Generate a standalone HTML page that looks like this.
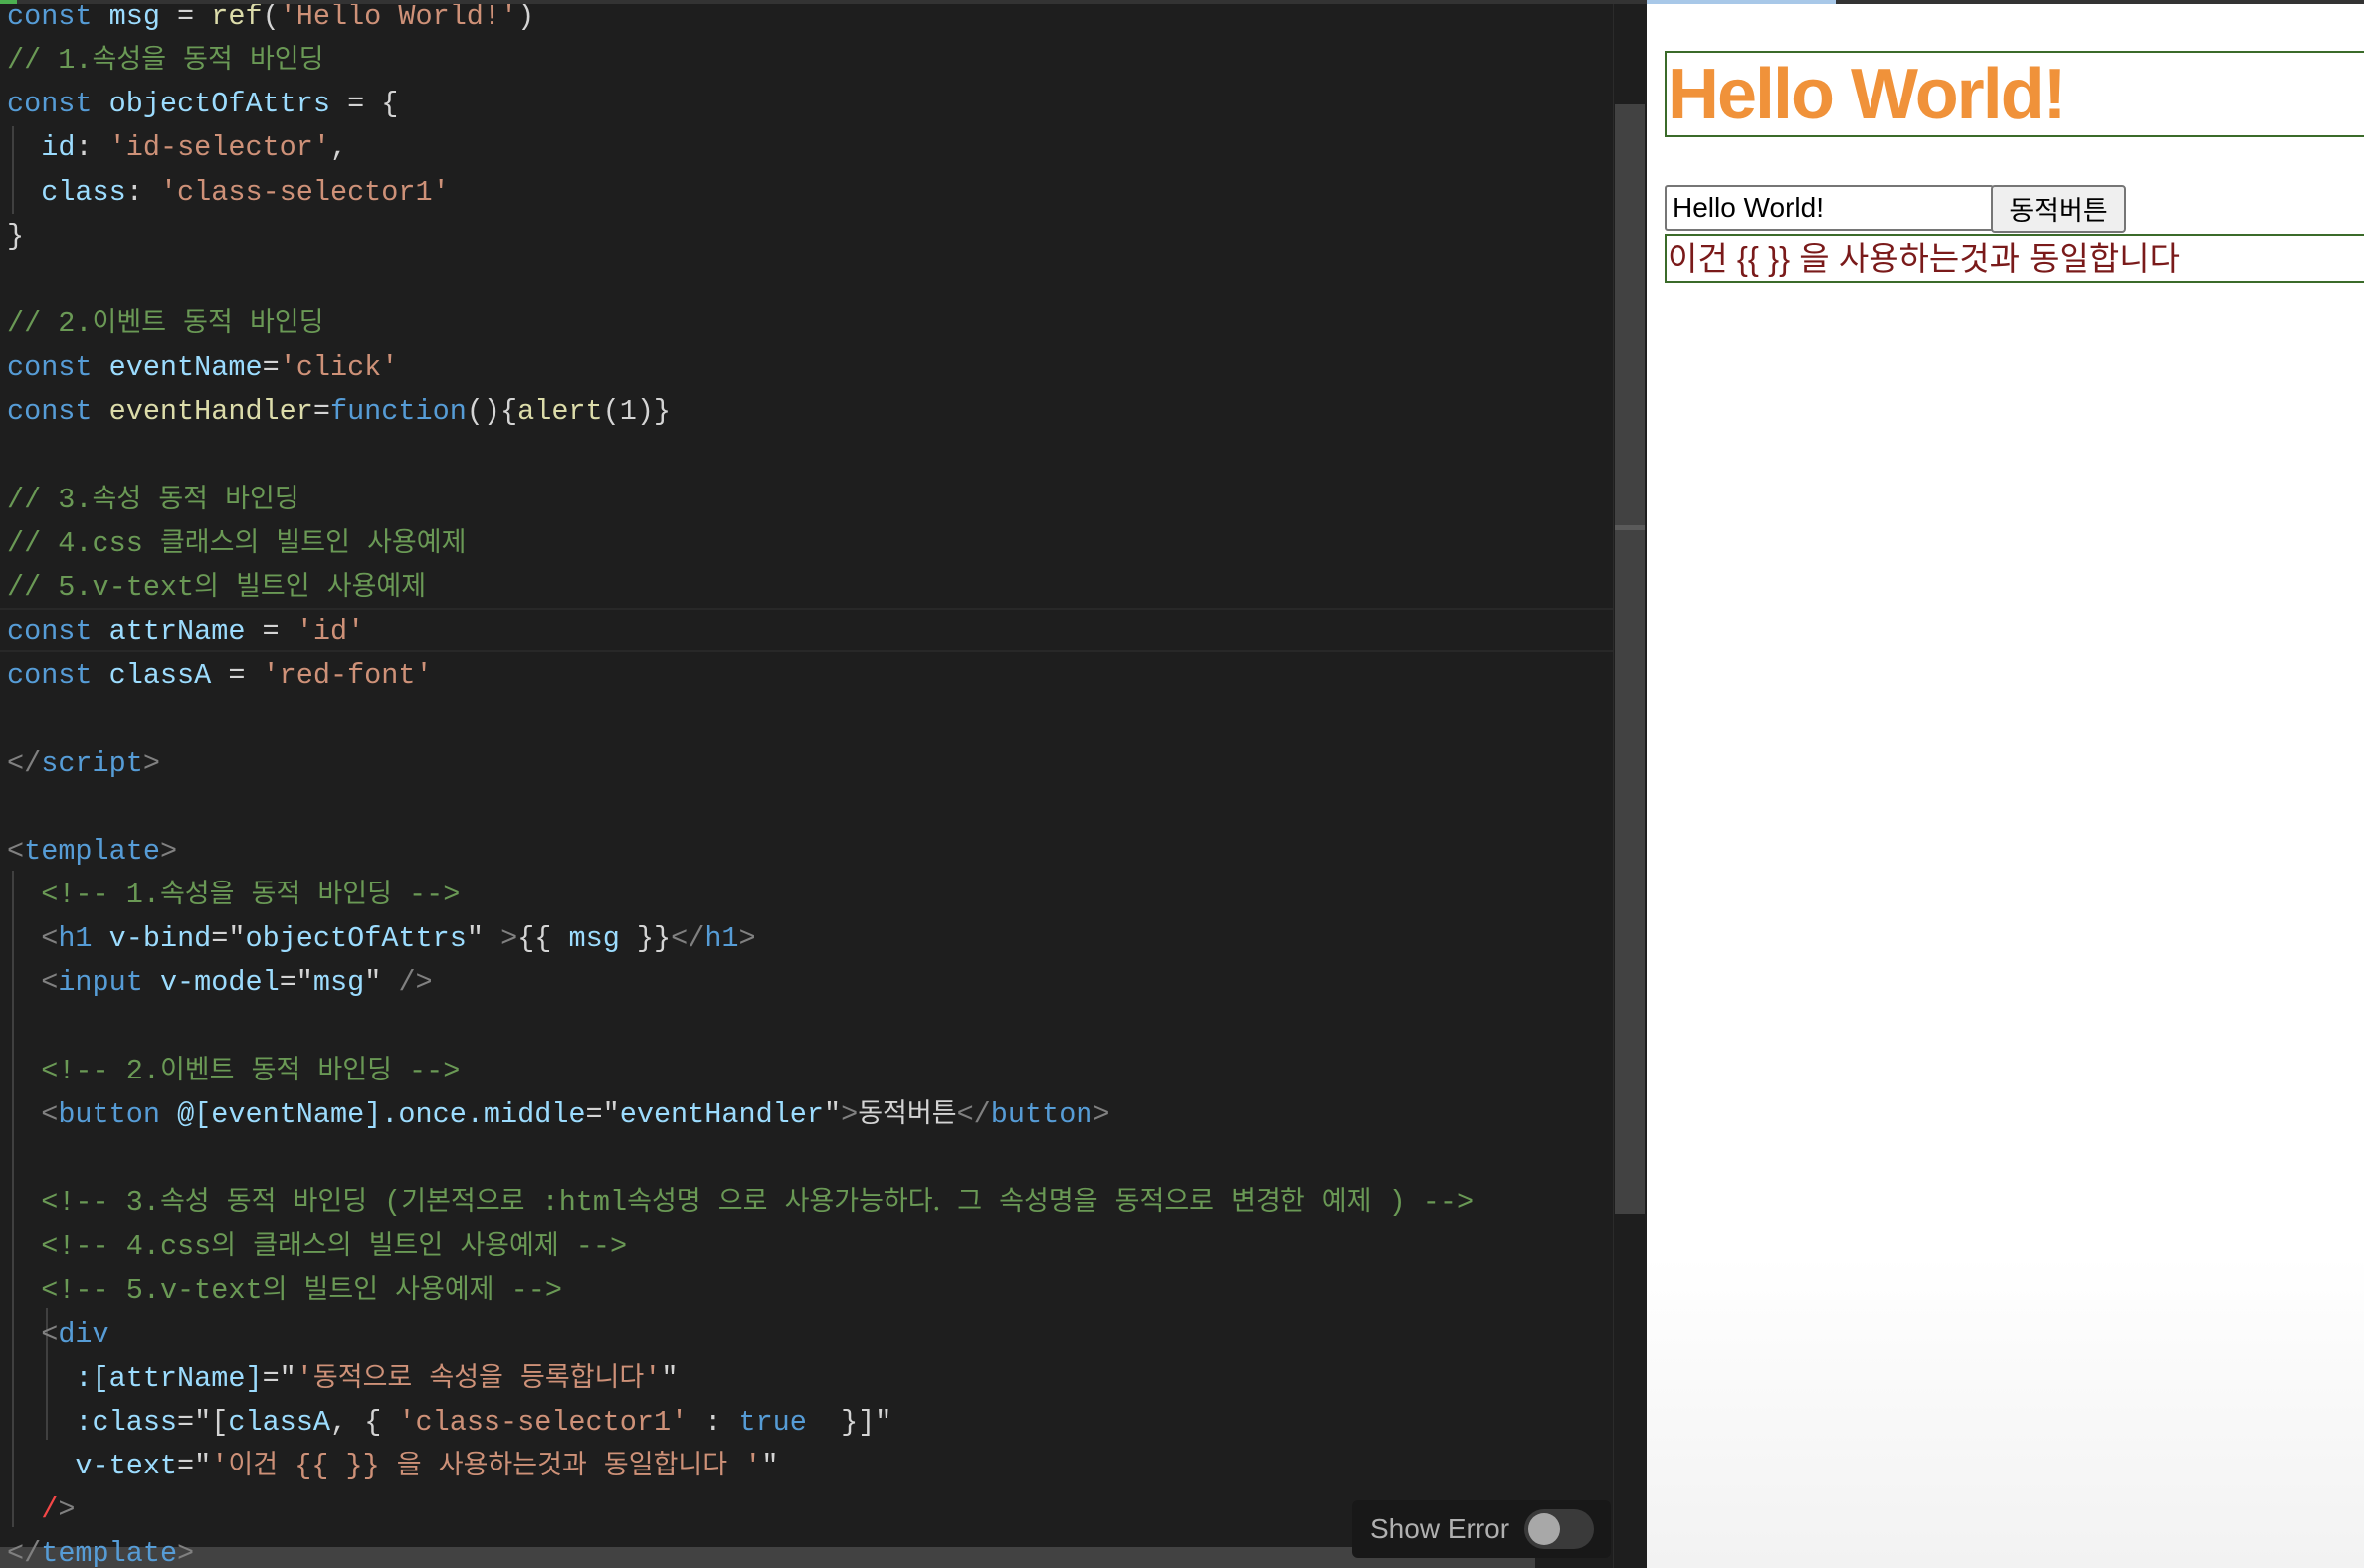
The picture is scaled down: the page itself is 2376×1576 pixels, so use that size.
<!DOCTYPE html>
<html><head><meta charset="utf-8"><style>
html,body{margin:0;padding:0;width:2376px;height:1576px;overflow:hidden;background:#1e1e1e;}
#ed{position:absolute;left:0;top:0;width:1621px;height:1576px;background:#1e1e1e;overflow:hidden;}
pre{position:absolute;left:7px;top:-5px;margin:0;font-family:"Liberation Mono",monospace;font-size:28.5px;line-height:44.15px;color:#d4d4d4;white-space:pre;}
.k{font-family:"Noto Sans CJK KR",sans-serif;font-size:27px;line-height:0;}
.kw{color:#569cd6}.v{color:#9cdcfe}.s{color:#ce9178}.c{color:#6a9955}.f{color:#dcdcaa}.g{color:#808080}.t{color:#569cd6}.r{color:#f44747}
#sb{position:absolute;left:1621px;top:0;width:34px;height:1576px;background:#1e1e1e;border-left:1px solid #2b2b2b;}
#sbt{position:absolute;left:1623px;top:105px;width:30px;height:1115px;background:#424242;}
#sbt2{position:absolute;left:1623px;top:528px;width:30px;height:5px;background:#5a5a5a;}
#hs{position:absolute;left:0;top:1555px;width:1543px;height:21px;background:#424242;}
#cur{position:absolute;left:0;top:611px;width:1621px;height:40px;border-top:2px solid #282828;border-bottom:2px solid #282828;}
#topbar{position:absolute;left:0;top:0;width:2376px;height:4px;background:#333;}
#pv{position:absolute;left:1655px;top:4px;width:721px;height:1572px;background:linear-gradient(#fff 80%,#f2f2f2);}
.guide{position:absolute;width:2px;background:#404040;}
#h1{position:absolute;left:1673px;top:51px;width:720px;height:83px;border:2px solid #3b6b2a;}
#h1 span{position:absolute;left:1px;top:0;font:bold 72px/84px "Liberation Sans",sans-serif;color:#f0923a;letter-spacing:-2px;}
#inp{position:absolute;left:1673px;top:186px;width:321px;height:42px;border:2px solid #767676;border-radius:3px;background:#fff;font:28px/42px "Liberation Sans",sans-serif;color:#000;padding-left:6px;}
#btn{position:absolute;left:2001px;top:186px;width:132px;height:44px;border:2px solid #767676;border-radius:4px;background:#efefef;font:27px/44px "Noto Sans CJK KR",sans-serif;color:#000;text-align:center;white-space:nowrap;}
#dv{position:absolute;left:1673px;top:235px;width:720px;height:45px;border:2px solid #3b6b2a;font:33px/45px "Liberation Sans","Noto Sans CJK KR",sans-serif;color:#7a1a1a;padding-left:1px;white-space:nowrap;}
#se{position:absolute;left:1359px;top:1508px;width:260px;height:58px;background:#181818;border-radius:6px;}
#se span{position:absolute;left:18px;top:10px;font:28px/38px "Liberation Sans",sans-serif;color:#b0b0b0;}
#tg{position:absolute;left:173px;top:9px;width:70px;height:40px;border-radius:20px;background:#3a3a3a;}
#tg i{position:absolute;left:4px;top:4px;width:32px;height:32px;border-radius:50%;background:#a8a8a8;}
</style></head><body>
<div id="ed">
<div id="cur"></div>
<div id="hs"></div>
<div class="guide" style="left:12px;top:127px;height:88px"></div>
<div class="guide" style="left:12px;top:875px;height:660px"></div>
<div class="guide" style="left:46px;top:1315px;height:132px"></div>
<pre><span class="kw">const</span> <span class="v">msg</span> = <span class="f">ref</span>(<span class="s">'Hello World!'</span>)
<span class="c">// 1.<span class="k">속성을</span> <span class="k">동적</span> <span class="k">바인딩</span></span>
<span class="kw">const</span> <span class="v">objectOfAttrs</span> = {
  <span class="v">id</span>: <span class="s">'id-selector'</span>,
  <span class="v">class</span>: <span class="s">'class-selector1'</span>
}

<span class="c">// 2.<span class="k">이벤트</span> <span class="k">동적</span> <span class="k">바인딩</span></span>
<span class="kw">const</span> <span class="v">eventName</span>=<span class="s">'click'</span>
<span class="kw">const</span> <span class="f">eventHandler</span>=<span class="kw">function</span>(){<span class="f">alert</span>(1)}

<span class="c">// 3.<span class="k">속성</span> <span class="k">동적</span> <span class="k">바인딩</span></span>
<span class="c">// 4.css <span class="k">클래스의</span> <span class="k">빌트인</span> <span class="k">사용예제</span></span>
<span class="c">// 5.v-text<span class="k">의</span> <span class="k">빌트인</span> <span class="k">사용예제</span></span>
<span class="kw">const</span> <span class="v">attrName</span> = <span class="s">'id'</span>
<span class="kw">const</span> <span class="v">classA</span> = <span class="s">'red-font'</span>

<span class="g">&lt;/</span><span class="t">script</span><span class="g">&gt;</span>

<span class="g">&lt;</span><span class="t">template</span><span class="g">&gt;</span>
  <span class="c">&lt;!-- 1.<span class="k">속성을</span> <span class="k">동적</span> <span class="k">바인딩</span> --&gt;</span>
  <span class="g">&lt;</span><span class="t">h1</span> <span class="v">v-bind</span>="<span class="v">objectOfAttrs</span>" <span class="g">&gt;</span>{{ <span class="v">msg</span> }}<span class="g">&lt;/</span><span class="t">h1</span><span class="g">&gt;</span>
  <span class="g">&lt;</span><span class="t">input</span> <span class="v">v-model</span>="<span class="v">msg</span>" <span class="g">/&gt;</span>

  <span class="c">&lt;!-- 2.<span class="k">이벤트</span> <span class="k">동적</span> <span class="k">바인딩</span> --&gt;</span>
  <span class="g">&lt;</span><span class="t">button</span> <span class="v">@[eventName].once.middle</span>="<span class="v">eventHandler</span>"<span class="g">&gt;</span><span class="k">동적버튼</span><span class="g">&lt;/</span><span class="t">button</span><span class="g">&gt;</span>

  <span class="c">&lt;!-- 3.<span class="k">속성</span> <span class="k">동적</span> <span class="k">바인딩</span> (<span class="k">기본적으로</span> :html<span class="k">속성명</span> <span class="k">으로</span> <span class="k">사용가능하다.</span> <span class="k">그</span> <span class="k">속성명을</span> <span class="k">동적으로</span> <span class="k">변경한</span> <span class="k">예제</span> ) --&gt;</span>
  <span class="c">&lt;!-- 4.css<span class="k">의</span> <span class="k">클래스의</span> <span class="k">빌트인</span> <span class="k">사용예제</span> --&gt;</span>
  <span class="c">&lt;!-- 5.v-text<span class="k">의</span> <span class="k">빌트인</span> <span class="k">사용예제</span> --&gt;</span>
  <span class="g">&lt;</span><span class="t">div</span>
    <span class="v">:[attrName]</span>="<span class="s">'<span class="k">동적으로</span> <span class="k">속성을</span> <span class="k">등록합니다</span>'</span>"
    <span class="v">:class</span>="[<span class="v">classA</span>, { <span class="s">'class-selector1'</span> : <span class="kw">true</span>  }]"
    <span class="v">v-text</span>="<span class="s">'<span class="k">이건</span> {{ }} <span class="k">을</span> <span class="k">사용하는것과</span> <span class="k">동일합니다</span> '</span>"
  <span class="r">/</span><span class="g">&gt;</span>
<span class="g">&lt;/</span><span class="t">template</span><span class="g">&gt;</span></pre>
<div id="se"><span>Show Error</span><div id="tg"><i></i></div></div>
</div>
<div id="sb"></div>
<div id="sbt"></div>
<div id="sbt2"></div>
<div id="pv"></div>
<div id="topbar"><div style="position:absolute;left:0;top:0;width:17px;height:4px;background:#4caf50"></div><div style="position:absolute;left:1655px;top:0;width:190px;height:4px;background:#a8c8e8"></div></div>
<div id="h1"><span>Hello World!</span></div>
<div id="inp">Hello World!</div>
<div id="btn">동적버튼</div>
<div id="dv">이건 {{ }} 을 사용하는것과 동일합니다</div>
</body></html>
